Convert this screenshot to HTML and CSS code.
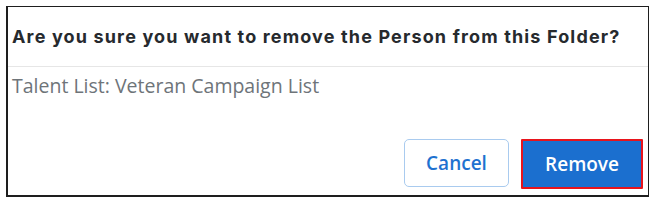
FILE: index.html
```html
<!DOCTYPE html>
<html>
<head>
<meta charset="utf-8">
<link rel="stylesheet" href="styles.css">
</head>
<body>
<div class="dialog">
  <div class="dialog-header">
    <h2 class="dialog-title">Are you sure you want to remove the Person from this Folder?</h2>
  </div>
  <div class="dialog-body">
    <p class="dialog-text">Talent List: Veteran Campaign List</p>
  </div>
  <div class="dialog-footer">
    <button class="btn btn-outline">Cancel</button>
    <button class="btn btn-primary">Remove</button>
  </div>
</div>
</body>
</html>
```
FILE: styles.css
```css
html, body {
  margin: 0;
  padding: 0;
  background: #ffffff;
}
body {
  padding: 6px;
}
.dialog {
  box-sizing: border-box;
  width: 643px;
  height: 191px;
  border: 1px solid #1e1e1e;
  border-left-width: 2px;
  border-bottom-width: 2px;
  background: #fff;
  display: flex;
  flex-direction: column;
}
.dialog-header {
  height: 59px;
  border-bottom: 1px solid #e6e6e6;
  padding: 0 4px;
  display: flex;
  align-items: center;
}
.dialog-title {
  margin: 0;
  font-family: "Inter", "DejaVu Sans", sans-serif;
  font-weight: 700;
  font-size: 18px;
  color: #262a2e;
  letter-spacing: 1.15px;
  white-space: nowrap;
}
.dialog-body {
  padding: 5px 4px 0;
  flex: 1;
}
.dialog-text {
  margin: 0;
  font-family: "Open Sans", sans-serif;
  font-size: 19.5px;
  color: #6e7479;
}
.dialog-footer {
  display: flex;
  justify-content: flex-end;
  gap: 12px;
  padding: 0 5px 6px 0;
}
.btn {
  font-family: "Open Sans", sans-serif;
  font-weight: 600;
  font-size: 19px;
  height: 48px;
  border-radius: 5px;
  box-sizing: border-box;
  cursor: pointer;
}
.btn-outline {
  width: 105px;
  background: #fff;
  color: #1f72d0;
  border: 1px solid #a9cbef;
}
.btn-primary {
  width: 122px;
  height: 50px;
  background: #1b6fcf;
  color: #fff;
  border: 2px solid #e8141c;
  border-radius: 1px;
}
```
